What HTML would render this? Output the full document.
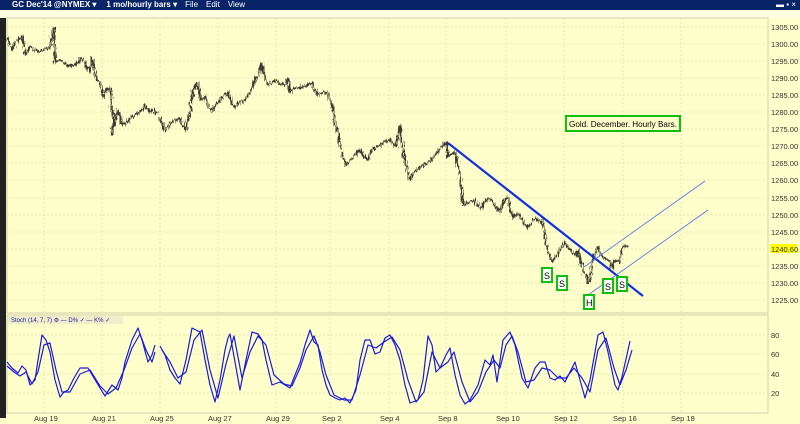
<!DOCTYPE html>
<html><head><meta charset="utf-8"><style>
body{margin:0;width:800px;height:424px;overflow:hidden;background:#ffffcc;font-family:"Liberation Sans",sans-serif;}
#title{position:absolute;left:0;top:0;width:800px;height:10px;background:#0a2468;color:#fff;font-size:8px;line-height:10px;}
#tb{position:absolute;left:0;top:10px;width:800px;height:8px;background:#fdfde0;}
svg{position:absolute;left:0;top:0}
</style></head><body>
<div id="title"><span style="margin-left:12px;font-weight:bold">GC Dec'14 @NYMEX ▾</span><span style="margin-left:10px;font-weight:bold">1 mo/hourly bars ▾</span><span style="margin-left:8px">File</span><span style="margin-left:8px">Edit</span><span style="margin-left:8px">View</span><span style="position:absolute;right:4px">▬ ▪ ×</span></div>
<div id="tb"></div>
<svg width="800" height="424" font-family="Liberation Sans" font-size="8">
<defs><filter id="j" x="-5%" y="-10%" width="110%" height="120%"><feTurbulence type="fractalNoise" baseFrequency="0.9 0.15" numOctaves="2" seed="3"/><feDisplacementMap in="SourceGraphic" scale="7" xChannelSelector="R" yChannelSelector="G"/></filter></defs>
<rect x="0" y="18" width="6" height="400" fill="#222"/>
<rect x="7" y="18" width="761" height="295" fill="#ffffcc" stroke="#cfcfaa"/>
<rect x="7" y="315" width="761" height="98" fill="#ffffcc" stroke="#cfcfaa"/>
<g stroke="#e6e6b0" stroke-dasharray="2,2">
<line x1="7" x2="768" y1="27" y2="27"/><line x1="7" x2="768" y1="44" y2="44"/><line x1="7" x2="768" y1="61" y2="61"/><line x1="7" x2="768" y1="78" y2="78"/><line x1="7" x2="768" y1="95" y2="95"/><line x1="7" x2="768" y1="112" y2="112"/><line x1="7" x2="768" y1="129" y2="129"/><line x1="7" x2="768" y1="146" y2="146"/><line x1="7" x2="768" y1="163" y2="163"/><line x1="7" x2="768" y1="180" y2="180"/><line x1="7" x2="768" y1="198" y2="198"/><line x1="7" x2="768" y1="215" y2="215"/><line x1="7" x2="768" y1="232" y2="232"/><line x1="7" x2="768" y1="249" y2="249"/><line x1="7" x2="768" y1="266" y2="266"/><line x1="7" x2="768" y1="283" y2="283"/><line x1="7" x2="768" y1="300" y2="300"/>
<line x1="7" x2="768" y1="335" y2="335"/><line x1="7" x2="768" y1="354" y2="354"/><line x1="7" x2="768" y1="374" y2="374"/><line x1="7" x2="768" y1="393" y2="393"/>
<line x1="44" x2="44" y1="18" y2="413"/><line x1="102" x2="102" y1="18" y2="413"/><line x1="160" x2="160" y1="18" y2="413"/><line x1="218" x2="218" y1="18" y2="413"/><line x1="276" x2="276" y1="18" y2="413"/><line x1="330" x2="330" y1="18" y2="413"/><line x1="389" x2="389" y1="18" y2="413"/><line x1="446" x2="446" y1="18" y2="413"/><line x1="506" x2="506" y1="18" y2="413"/><line x1="564" x2="564" y1="18" y2="413"/><line x1="623" x2="623" y1="18" y2="413"/><line x1="681" x2="681" y1="18" y2="413"/>
</g>
<g fill="#333" font-size="7.5">
<text x="771" y="30">1305.00</text><text x="771" y="47">1300.00</text><text x="771" y="64">1295.00</text><text x="771" y="81">1290.00</text><text x="771" y="98">1285.00</text><text x="771" y="115">1280.00</text><text x="771" y="132">1275.00</text><text x="771" y="149">1270.00</text><text x="771" y="166">1265.00</text><text x="771" y="183">1260.00</text><text x="771" y="201">1255.00</text><text x="771" y="218">1250.00</text><text x="771" y="235">1245.00</text>
<rect x="770" y="244" width="27" height="9" fill="#ffff00"/><text x="771" y="252">1240.60</text>
<text x="771" y="269">1235.00</text><text x="771" y="286">1230.00</text><text x="771" y="303">1225.00</text>
<text x="771" y="338">80</text><text x="771" y="357">60</text><text x="771" y="377">40</text><text x="771" y="396">20</text>
<text x="34" y="421">Aug 19</text><text x="92" y="421">Aug 21</text><text x="150" y="421">Aug 25</text><text x="208" y="421">Aug 27</text><text x="266" y="421">Aug 29</text><text x="322" y="421">Sep 2</text><text x="380" y="421">Sep 4</text><text x="438" y="421">Sep 8</text><text x="496" y="421">Sep 10</text><text x="554" y="421">Sep 12</text><text x="613" y="421">Sep 16</text><text x="671" y="421">Sep 18</text>
</g>
<g fill="none" stroke-linejoin="round">
<g filter="url(#j)">
<polyline stroke="#3a3a30" stroke-width="2" points="7,37 10,44 12,50 16,42 22,36 25,55 30,47 38,52 45,49 50,47 54,28 55,62 60,60 68,66 75,65 82,58 86,66 90,72 92,58 96,78 100,85 104,97 106,90 110,88 112,110 114,116 112,135 116,118 118,110 122,124 125,125 132,116 140,112 145,105 150,112 153,110 155,113 158,112"/>
<polyline stroke="#3a3a30" stroke-width="2" points="160,118 165,130 172,122 180,118 185,131 190,112 193,90 197,83 201,100 205,95 208,106 212,112 216,104 220,100 224,96 228,92 232,104 235,107 240,102 245,100 249,94 252,88 256,78 258,75 262,62 264,76 268,85 272,82 276,80 280,84 285,85 288,78 290,92 294,88 300,88 306,86 312,83 316,92 318,95 324,92 327,93 332,103 335,125 338,130 340,145 344,160 346,165 352,158 360,150 364,156 368,160 372,150 380,145 386,141 390,140 396,147 400,125 403,150 405,160 410,180 414,172 420,167 426,164 430,162 436,154 440,149 446,142 448,157 452,154 455,152 460,175 463,205 468,203 475,200 478,206 482,208 486,200 490,198 495,206 500,212 504,200 508,197 512,218 516,214 520,215 524,222 527,228 532,222 535,218 540,222 542,220 545,235 548,252 552,262 556,256 560,250 565,242 568,248 572,252 575,256 578,250 582,268 586,277 588,282 590,282 592,262 596,252 598,247 602,257 605,258 610,262 612,268 615,260 620,262 622,250 625,245 628,247"/>
</g>
<line x1="448" y1="143" x2="643" y2="296" stroke="#1030e0" stroke-width="2.2"/>
<line x1="584" y1="267" x2="705" y2="181" stroke="#5070f0" stroke-width="0.8"/>
<line x1="588" y1="295" x2="708" y2="210" stroke="#5070f0" stroke-width="0.8"/>
<polyline stroke="#1a1adc" stroke-width="1.2" points="7,362 12,368 18,373 22,366 26,370 30,385 35,380 38,360 42,335 46,340 50,352 55,380 60,397 64,392 68,390 74,378 80,368 88,368 94,378 100,388 105,396 112,385 118,390 122,378 125,362 132,340 138,328 142,340 148,362 152,355 155,345"/>
<polyline stroke="#1a1adc" stroke-width="1.2" points="7,366 14,372 20,376 26,372 32,384 38,372 44,345 50,343 56,370 62,392 70,392 80,374 90,370 100,386 108,394 116,388 124,370 132,348 140,334 146,350 152,362 155,352"/>
<polyline stroke="#1a1adc" stroke-width="1.2" points="160,346 165,355 170,370 175,378 180,384 186,360 192,328 200,332 205,360 210,385 215,402 220,380 225,350 228,338 230,334 235,362 240,390 246,360 252,332 258,334 262,340 266,360 272,385 280,382 285,385 290,388 295,375 300,363 305,345 310,330 314,342 318,345 322,370 326,385 330,395 335,398 340,400 345,398 350,403 356,390 360,360 365,340 370,340 375,354 380,352 385,338 390,335 395,345 400,360 405,385 410,403 418,400 423,380 428,336 432,345 436,372 440,368 446,355 450,348 455,375 460,395 465,404 470,400 478,385 485,360 490,365 493,355 497,382 503,340 510,332 515,345 522,378 528,388 535,368 540,362 545,362 550,378 555,380 560,376 565,382 570,372 575,362 580,380 585,398 590,380 598,335 603,332 608,352 615,385 618,390 622,377 630,341"/>
<polyline stroke="#1a1adc" stroke-width="1.2" points="162,350 170,362 178,378 186,372 194,340 202,330 210,370 218,398 226,364 234,336 242,378 250,352 258,336 266,345 274,375 284,384 292,386 300,368 306,350 314,336 320,352 326,375 334,395 344,400 352,400 360,375 368,345 376,348 384,342 392,337 400,350 408,380 416,402 424,392 432,352 440,368 448,362 454,352 462,382 470,402 478,392 486,372 494,360 500,368 506,345 512,336 518,352 526,382 534,380 542,368 550,370 558,378 566,378 574,368 582,378 590,392 598,350 606,338 614,368 620,385 626,370 632,350"/>
</g>
<rect x="8" y="316" width="115" height="8" fill="#eeeecc"/>
<text x="11" y="322" fill="#1a1a8c" font-size="6">Stoch   (14, 7, 7) ⚙    — D% ✓   — K% ✓</text>
<g fill="#fff" stroke="#10c010" stroke-width="2">
<rect x="566" y="116" width="114" height="15" fill="#ffffcc"/>
<rect x="542" y="268" width="10" height="14"/><rect x="557" y="276" width="10" height="14"/><rect x="584" y="295" width="10" height="14"/><rect x="603" y="279" width="10" height="14"/><rect x="617" y="277" width="10" height="14"/>
</g>
<g fill="#000" font-size="9">
<text x="569" y="127" font-size="8.2" textLength="108" lengthAdjust="spacingAndGlyphs">Gold. December. Hourly Bars.</text>
<text x="544" y="279">S</text><text x="559" y="287">S</text><text x="586" y="306">H</text><text x="605" y="290">S</text><text x="619" y="288">S</text>
</g>
</svg>
</body></html>
